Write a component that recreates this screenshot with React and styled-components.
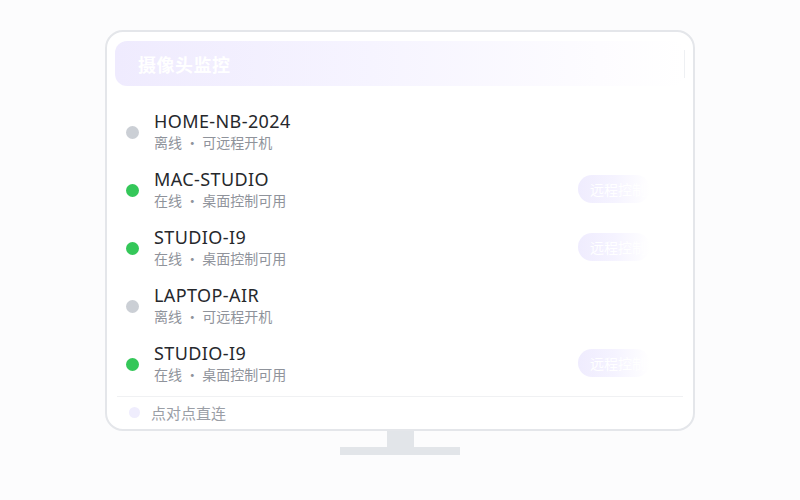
import styled, { createGlobalStyle } from 'styled-components';

const GlobalStyle = createGlobalStyle`
    html, body {
        margin: 0;
        padding: 0;
        background: #fcfcfd;
        font-family: "Noto Sans", "Noto Sans CJK SC", sans-serif;
    }
`;

const Page = styled.div`
    width: 800px;
    height: 500px;
    display: flex;
    flex-direction: column;
    align-items: center;
    padding-top: 30px;
    box-sizing: border-box;
`;

const Screen = styled.div`
    width: 590px;
    height: 401px;
    box-sizing: border-box;
    border: 2px solid #e4e6ea;
    border-radius: 18px;
    background: #ffffff;
    padding: 9px 8px 0 8px;
    display: flex;
    flex-direction: column;
`;

const Header = styled.div`
    height: 45px;
    border-radius: 12px;
    background: linear-gradient(90deg, #efebfe 0%, #f6f4ff 45%, #fdfcff 85%, #ffffff 100%);
    display: flex;
    align-items: center;
    justify-content: space-between;
    padding: 0 0 0 23px;
`;

const Title = styled.h1`
    margin: 0;
    font-size: 18px;
    font-weight: 700;
    color: #ffffff;
    letter-spacing: 0.5px;
`;

const HeaderEdge = styled.span`
    width: 1px;
    height: 28px;
    background: #eef0f3;
`;

const List = styled.div`
    display: flex;
    flex-direction: column;
    padding-top: 17px;
`;

const Row = styled.div`
    height: 58px;
    display: flex;
    align-items: center;
    padding: 0 35px 0 11px;
`;

const Dot = styled.span`
    width: 13px;
    height: 13px;
    border-radius: 50%;
    flex-shrink: 0;
    background: ${(p) => (p.$online ? '#34c759' : '#cbcfd5')};
    margin-right: 15px;
`;

const Info = styled.div`
    flex: 1;
    display: flex;
    flex-direction: column;
    margin-top: -2px;
`;

const Name = styled.div`
    font-size: 18px;
    line-height: 22px;
    color: #26282c;
    letter-spacing: 0.4px;
`;

const Status = styled.div`
    font-family: "Noto Sans CJK SC", sans-serif;
    font-size: 14px;
    line-height: 20px;
    color: #8f939b;
`;

const RemoteBtn = styled.button`
    width: 72px;
    height: 28px;
    border: none;
    border-radius: 14px;
    padding: 0 0 0 12px;
    text-align: left;
    font-family: "Noto Sans CJK SC", sans-serif;
    font-size: 14px;
    color: #ffffff;
    background: linear-gradient(90deg, #efecfe 0%, #f5f3ff 50%, #ffffff 100%);
    margin-top: -3px;
    white-space: nowrap;
    overflow: hidden;
`;

const Divider = styled.div`
    height: 1px;
    background: #f0f1f3;
    margin: 3px 2px 0;
`;

const Footer = styled.div`
    flex: 1;
    display: flex;
    align-items: center;
    padding-left: 14px;
    gap: 11px;
    margin-top: -1px;
`;

const FooterDot = styled.span`
    width: 11px;
    height: 11px;
    border-radius: 50%;
    background: #efedfd;
`;

const FooterText = styled.span`
    font-family: "Noto Sans CJK SC", sans-serif;
    font-size: 15px;
    color: #9a9ea6;
`;

const Neck = styled.div`
    width: 27px;
    height: 16px;
    background: #e2e5e9;
`;

const Base = styled.div`
    width: 120px;
    height: 8px;
    background: #e2e5e9;
`;

const devices = [
    { name: 'HOME-NB-2024', online: false },
    { name: 'MAC-STUDIO', online: true },
    { name: 'STUDIO-I9', online: true },
    { name: 'LAPTOP-AIR', online: false },
    { name: 'STUDIO-I9', online: true },
];

export default function App() {
    return (
        <Page>
            <GlobalStyle />
            <Screen>
                <Header>
                    <Title>摄像头监控</Title>
                    <HeaderEdge />
                </Header>
                <List>
                    {devices.map((d, i) => (
                        <Row key={i}>
                            <Dot $online={d.online} />
                            <Info>
                                <Name>{d.name}</Name>
                                <Status>{d.online ? '在线 · 桌面控制可用' : '离线 · 可远程开机'}</Status>
                            </Info>
                            {d.online && <RemoteBtn>远程控制</RemoteBtn>}
                        </Row>
                    ))}
                </List>
                <Divider />
                <Footer>
                    <FooterDot />
                    <FooterText>点对点直连</FooterText>
                </Footer>
            </Screen>
            <Neck />
            <Base />
        </Page>
    );
}
